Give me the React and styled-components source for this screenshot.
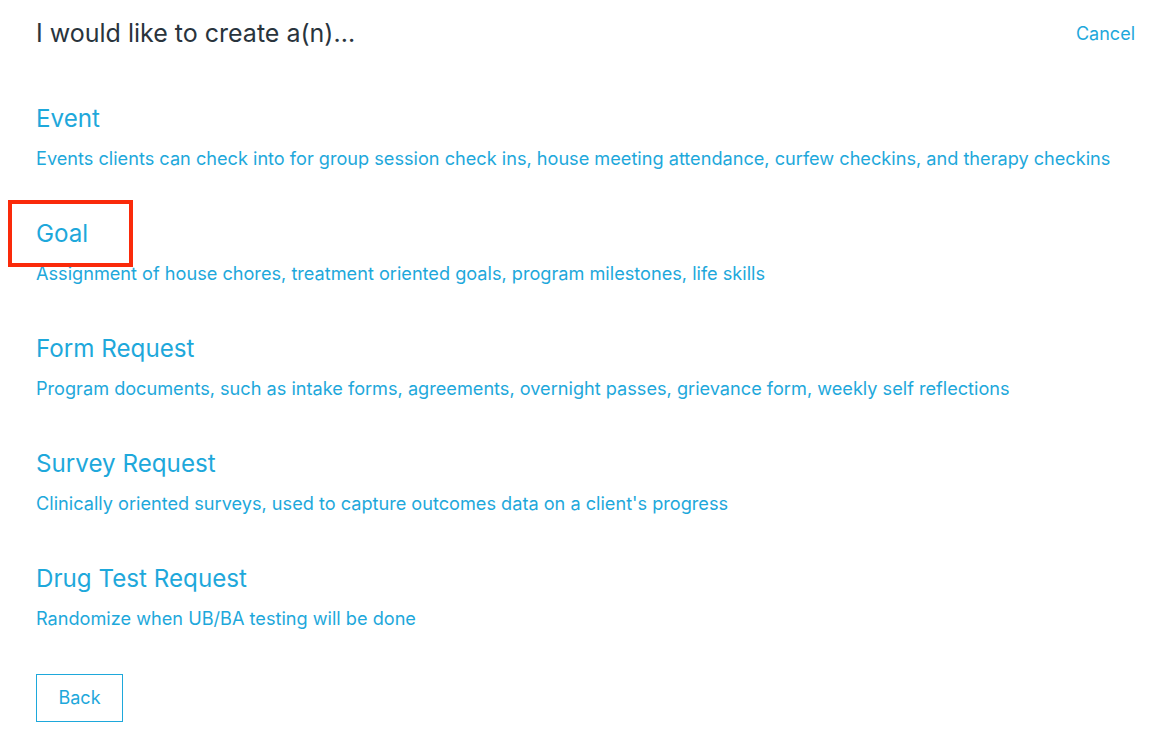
import React from "react";
import styled, { createGlobalStyle } from "styled-components";

const GlobalStyle = createGlobalStyle`
  body {
    margin: 0;
    background: #ffffff;
    font-family: Inter, "Noto Sans", sans-serif;
  }
`;

const options = [
  {
    title: "Event",
    text: "Events clients can check into for group session check ins, house meeting attendance, curfew checkins, and therapy checkins",
  },
  {
    title: "Goal",
    text: "Assignment of house chores, treatment oriented goals, program milestones, life skills",
    marked: true,
  },
  {
    title: "Form Request",
    text: "Program documents, such as intake forms, agreements, overnight passes, grievance form, weekly self reflections",
  },
  {
    title: "Survey Request",
    text: "Clinically oriented surveys, used to capture outcomes data on a client's progress",
  },
  {
    title: "Drug Test Request",
    text: "Randomize when UB/BA testing will be done",
  },
];

function App() {
  return (
    <Page>
      <GlobalStyle />
      <Header>
        <Title>I would like to create a(n)...</Title>
        <Cancel href="#">Cancel</Cancel>
      </Header>
      <List>
        {options.map((o) => (
          <Option key={o.title}>
            <OptionTitle>
              {o.title}
              {o.marked && <Highlight />}
            </OptionTitle>
            <OptionText>{o.text}</OptionText>
          </Option>
        ))}
      </List>
      <BackButton>Back</BackButton>
    </Page>
  );
}

export default App;

const Page = styled.div`
  padding: 17px 33px 0 36px;
  color: #1ea8db;
`;

const Header = styled.div`
  display: flex;
  justify-content: space-between;
  align-items: center;
`;

const Title = styled.h1`
  margin: 0;
  font-size: 25px;
  font-weight: 400;
  color: #29343d;
  line-height: 32px;
`;

const Cancel = styled.a`
  color: #1ea8db;
  text-decoration: none;
  font-size: 18px;
`;

const List = styled.div`
  display: flex;
  flex-direction: column;
  gap: 49.5px;
  margin-top: 55px;
`;

const Option = styled.div`
  display: flex;
  flex-direction: column;
  gap: 11.5px;
  cursor: pointer;
`;

const OptionTitle = styled.div`
  position: relative;
  font-size: 24.2px;
  line-height: 30px;
`;

const Highlight = styled.span`
  position: absolute;
  left: -28px;
  top: -19px;
  width: 117px;
  height: 59px;
  border: 4px solid #fa2a0a;
`;

const OptionText = styled.div`
  font-size: 18.15px;
  line-height: 24px;
`;

const BackButton = styled.button`
  margin-top: 44px;
  width: 87px;
  height: 48px;
  background: #fff;
  border: 1.5px solid #1ea8db;
  color: #1ea8db;
  font-family: inherit;
  font-size: 18px;
  cursor: pointer;
`;
